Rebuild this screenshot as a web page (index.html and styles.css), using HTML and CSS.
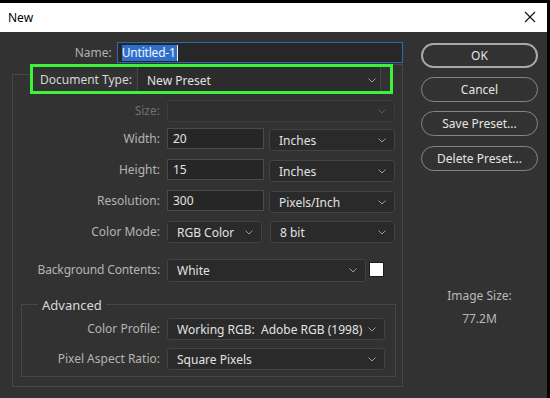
FILE: index.html
```html
<!DOCTYPE html>
<html lang="en">
<head>
    <meta charset="UTF-8">
    <meta name="viewport" content="width=device-width, initial-scale=1.0">
    <title>New</title>
    <link rel="stylesheet" href="styles.css">
</head>
<body>
    <div class="window">
        <div class="titlebar">
            <span class="title">New</span>
            <svg class="close" width="12" height="12" viewBox="0 0 12 12">
                <path d="M1 1L11 11M11 1L1 11" stroke="#111" stroke-width="1.1" fill="none"/>
            </svg>
        </div>

        <div class="dialog">
            <div class="form">
                <div class="name-row">
                    <span class="name-label">Name:</span>
                    <div class="name-input"><span class="selected">Untitled-1</span><span class="caret"></span></div>
                </div>

                <div class="group">
                    <div class="doctype">
                        <span class="doctype-label">Document Type:</span>
                        <div class="doctype-select">
                            <span>New Preset</span>
                            <svg class="chev" width="8" height="5" viewBox="0 0 8 5"><path d="M0.5 0.5L4 4L7.5 0.5" /></svg>
                        </div>
                    </div>

                    <div class="row row-size">
                        <span class="lbl disabled">Size:</span>
                        <div class="select size-select disabled">
                            <span></span>
                            <svg class="chev" width="8" height="5" viewBox="0 0 8 5"><path d="M0.5 0.5L4 4L7.5 0.5" /></svg>
                        </div>
                    </div>

                    <div class="row row-first">
                        <span class="lbl">Width:</span>
                        <div class="field">20</div>
                        <div class="select unit">
                            <span>Inches</span>
                            <svg class="chev" width="8" height="5" viewBox="0 0 8 5"><path d="M0.5 0.5L4 4L7.5 0.5" /></svg>
                        </div>
                    </div>

                    <div class="row">
                        <span class="lbl">Height:</span>
                        <div class="field">15</div>
                        <div class="select unit">
                            <span>Inches</span>
                            <svg class="chev" width="8" height="5" viewBox="0 0 8 5"><path d="M0.5 0.5L4 4L7.5 0.5" /></svg>
                        </div>
                    </div>

                    <div class="row">
                        <span class="lbl">Resolution:</span>
                        <div class="field">300</div>
                        <div class="select unit">
                            <span>Pixels/Inch</span>
                            <svg class="chev" width="8" height="5" viewBox="0 0 8 5"><path d="M0.5 0.5L4 4L7.5 0.5" /></svg>
                        </div>
                    </div>

                    <div class="row">
                        <span class="lbl">Color Mode:</span>
                        <div class="select mode">
                            <span>RGB Color</span>
                            <svg class="chev" width="8" height="5" viewBox="0 0 8 5"><path d="M0.5 0.5L4 4L7.5 0.5" /></svg>
                        </div>
                        <div class="select bits">
                            <span>8 bit</span>
                            <svg class="chev" width="8" height="5" viewBox="0 0 8 5"><path d="M0.5 0.5L4 4L7.5 0.5" /></svg>
                        </div>
                    </div>

                    <div class="row row-bg">
                        <span class="lbl">Background Contents:</span>
                        <div class="select bg-select">
                            <span>White</span>
                            <svg class="chev" width="8" height="5" viewBox="0 0 8 5"><path d="M0.5 0.5L4 4L7.5 0.5" /></svg>
                        </div>
                        <div class="swatch"></div>
                    </div>

                    <div class="advanced">
                        <div class="legend">Advanced</div>
                        <div class="row adv-row adv-first">
                            <span class="lbl">Color Profile:</span>
                            <div class="select adv-select">
                                <span>Working RGB:&nbsp; Adobe RGB (1998)</span>
                                <svg class="chev" width="8" height="5" viewBox="0 0 8 5"><path d="M0.5 0.5L4 4L7.5 0.5" /></svg>
                            </div>
                        </div>
                        <div class="row adv-row">
                            <span class="lbl">Pixel Aspect Ratio:</span>
                            <div class="select adv-select">
                                <span>Square Pixels</span>
                                <svg class="chev" width="8" height="5" viewBox="0 0 8 5"><path d="M0.5 0.5L4 4L7.5 0.5" /></svg>
                            </div>
                        </div>
                    </div>
                </div>
            </div>

            <div class="side">
                <button class="btn btn-ok">OK</button>
                <button class="btn">Cancel</button>
                <button class="btn">Save Preset...</button>
                <button class="btn btn-last">Delete Preset...</button>
                <div class="image-size">Image Size:</div>
                <div class="image-value">77.2M</div>
            </div>
        </div>
    </div>
</body>
</html>
```

FILE: styles.css
```css
body {
    margin: 0;
    background: #000;
    font-family: 'Noto Sans', 'Open Sans', sans-serif;
    font-size: 12px;
}
.window {
    width: 547px;
    margin-top: 3px;
}
.titlebar {
    height: 29px;
    background: #fff;
    display: flex;
    align-items: center;
    justify-content: space-between;
    padding: 0 11px 0 8px;
}
.title {
    color: #000;
    font-size: 12px;
}
.close {
    display: block;
    margin-top: -1px;
}
.dialog {
    height: 366px;
    background: #323232;
    display: flex;
    color: #e2e2e2;
}
.form {
    width: 403px;
    padding-top: 10px;
}
.name-row {
    display: flex;
    height: 21px;
}
.name-label {
    width: 112px;
    text-align: right;
    color: #b0b0b0;
    line-height: 21px;
}
.name-input {
    margin-left: 5px;
    width: 287px;
    height: 21px;
    box-sizing: border-box;
    border: 1px solid #2c67b0;
    background: #272727;
    padding: 2px 0 0 4px;
    display: flex;
}
.selected {
    background: #2f6fcc;
    color: #f2f6ff;
    line-height: 16px;
    height: 16px;
    padding-right: 1px;
    letter-spacing: -0.2px;
}
.caret {
    width: 1px;
    height: 16px;
    background: #eee;
}
.group {
    position: relative;
    margin: 14px 0 0 12px;
    width: 391px;
    box-sizing: border-box;
    border-right: 1px solid #474747;
    border-bottom: 1px solid #474747;
    padding-bottom: 9px;
}
.group::before {
    content: "";
    position: absolute;
    left: 0;
    top: 10px;
    bottom: 0;
    width: 18px;
    border-left: 1px solid #474747;
    border-top: 1px solid #474747;
}
.group::after {
    content: "";
    position: absolute;
    right: 0;
    top: 0;
    width: 9px;
    border-top: 1px solid #474747;
}
.doctype {
    position: relative;
    z-index: 1;
    margin: -13px 0 0 18px;
    width: 363px;
    height: 30px;
    box-sizing: border-box;
    border: 3px solid #3cf23a;
    background: #323232;
    display: flex;
}
.doctype-label {
    width: 104px;
    padding: 2px 0 0 7px;
    box-sizing: border-box;
    line-height: 22px;
    color: #d6d6d6;
}
.doctype-select {
    width: 244px;
    border-left: 1px solid #474747;
    border-right: 1px solid #474747;
    background: #2c2c2c;
    display: flex;
    justify-content: space-between;
    align-items: center;
    padding: 2px 4px 0 9px;
    box-sizing: border-box;
}
.chev {
    display: block;
    fill: none;
    stroke: #9c9c9c;
    stroke-width: 1;
}
.row {
    display: flex;
    align-items: flex-start;
    height: 22px;
    margin-top: 9px;
}
.row-size {
    margin-top: 6px;
}
.row-first {
    margin-top: 6px;
}
.row-bg {
    margin-top: 16px;
}
.lbl {
    width: 148px;
    margin-right: 7px;
    text-align: right;
    color: #b4b4b4;
    line-height: 22px;
}
.row-bg .lbl {
    letter-spacing: -0.15px;
}
.lbl.disabled {
    color: #6f6f6f;
}
.field {
    width: 97px;
    height: 21px;
    box-sizing: border-box;
    border: 1px solid #4a4a4a;
    background: #262626;
    padding-left: 5px;
    line-height: 19px;
}
.select {
    height: 22px;
    box-sizing: border-box;
    border: 1px solid #434343;
    border-radius: 3px;
    background: #2a2a2a;
    display: flex;
    justify-content: space-between;
    align-items: center;
    padding: 0 8px 0 9px;
}
.select.disabled {
    background: #2f2f2f;
    border-color: #3d3d3d;
}
.select.disabled .chev {
    stroke: #5a5a5a;
}
.size-select {
    width: 228px;
}
.unit {
    width: 126px;
    margin: 1px 0 0 5px;
}
.mode {
    width: 95px;
}
.bits {
    width: 125px;
    margin-left: 8px;
}
.bg-select {
    width: 199px;
    height: 23px;
}
.swatch {
    width: 15px;
    height: 15px;
    margin: 3px 0 0 3px;
    background: #fff;
    border: 1px solid #1c1c1c;
    box-sizing: border-box;
}
.advanced {
    margin: 23px 0 0 9px;
    width: 375px;
    box-sizing: border-box;
    border: 1px solid #474747;
    padding-bottom: 6px;
}
.legend {
    width: fit-content;
    margin: -8px 0 0 16px;
    padding: 0 4px;
    background: #323232;
    line-height: 16px;
    font-size: 13px;
    color: #d8d8d8;
}
.adv-row .lbl {
    width: 138px;
}
.adv-row {
    margin-top: 8px;
}
.adv-first {
    margin-top: 5px;
}
.adv-select {
    width: 218px;
}
.side {
    margin-left: 18px;
    width: 117px;
    padding-top: 11px;
    display: flex;
    flex-direction: column;
    align-items: center;
}
.btn {
    width: 117px;
    height: 25px;
    box-sizing: border-box;
    border: 1px solid #858585;
    border-radius: 13px;
    background: #323232;
    color: #e4e4e4;
    font-family: 'Noto Sans', 'Open Sans', sans-serif;
    font-size: 12px;
    padding: 0;
    margin-bottom: 9px;
}
.btn-ok {
    border: 2px solid #a8a8a8;
}
.btn-last {
    margin-top: 1px;
}
.image-size {
    margin-top: 108px;
    line-height: 16px;
    color: #b8b8b8;
}
.image-value {
    margin-top: 7px;
    line-height: 16px;
    color: #b8b8b8;
}
```
